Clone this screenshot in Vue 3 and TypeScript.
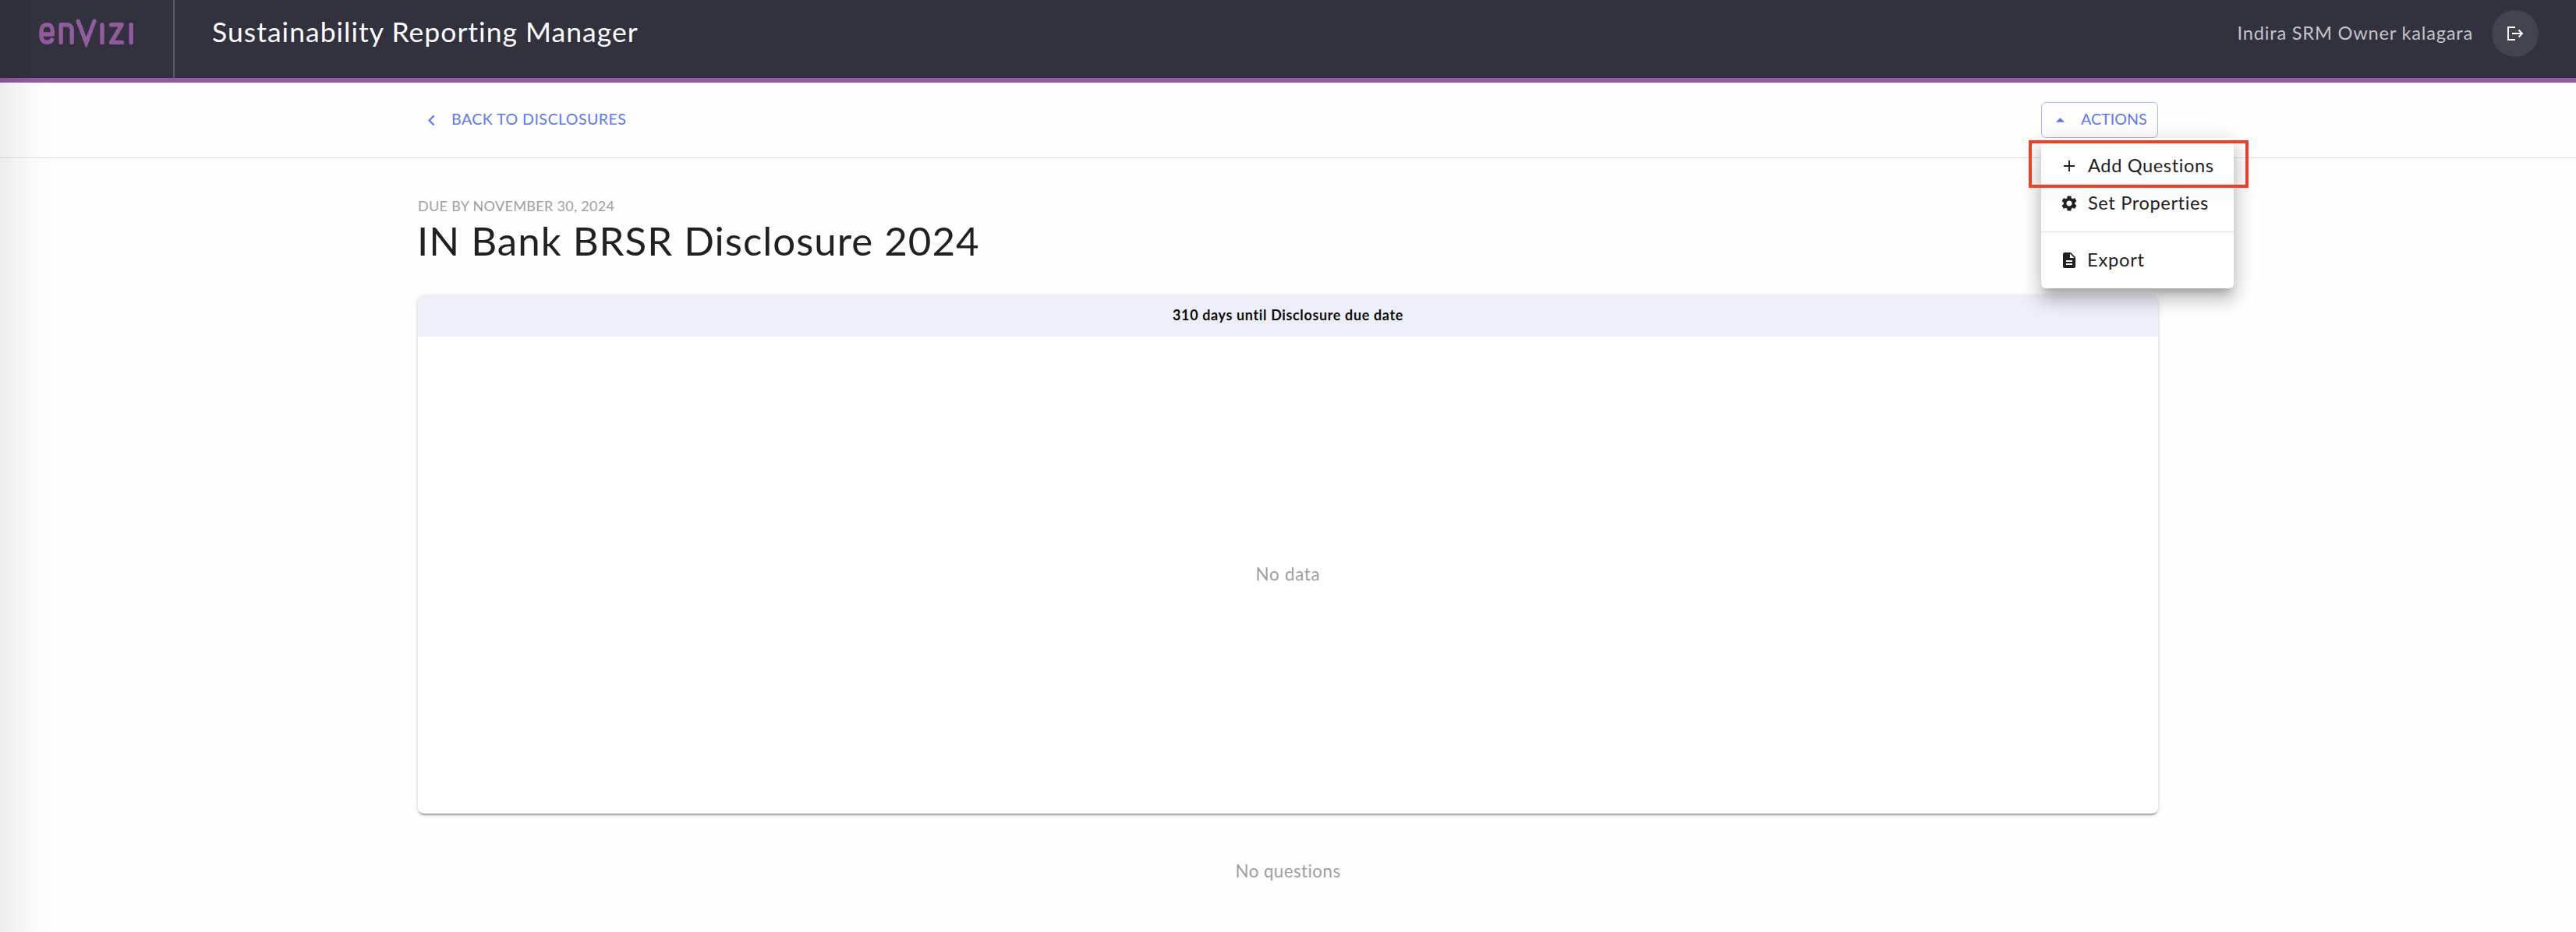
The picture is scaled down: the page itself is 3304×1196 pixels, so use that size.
<script setup lang="ts">
interface MenuItem {
  label: string
  icon: string
  kind: string
}

const groups: MenuItem[][] = [
  [
    { label: 'Add Questions', kind: 'add', icon: 'M19 13h-6v6h-2v-6H5v-2h6V5h2v6h6v2z' },
    {
      label: 'Set Properties',
      kind: 'set',
      icon: 'M19.14 12.94c.04-.3.06-.61.06-.94 0-.32-.02-.64-.07-.94l2.03-1.58c.18-.14.23-.41.12-.61l-1.92-3.32c-.12-.22-.37-.29-.59-.22l-2.39.96c-.5-.38-1.03-.7-1.62-.94l-.36-2.54c-.04-.24-.24-.41-.48-.41h-3.84c-.24 0-.43.17-.47.41l-.36 2.54c-.59.24-1.13.57-1.62.94l-2.39-.96c-.22-.08-.47 0-.59.22L2.74 8.87c-.12.21-.08.47.12.61l2.03 1.58c-.05.3-.09.63-.09.94s.02.64.07.94l-2.03 1.58c-.18.14-.23.41-.12.61l1.92 3.32c.12.22.37.29.59.22l2.39-.96c.5.38 1.03.7 1.62.94l.36 2.54c.05.24.24.41.48.41h3.84c.24 0 .44-.17.47-.41l.36-2.54c.59-.24 1.13-.56 1.62-.94l2.39.96c.22.08.47 0 .59-.22l1.92-3.32c.12-.22.07-.47-.12-.61l-2.01-1.58zM12 15.6c-1.98 0-3.6-1.62-3.6-3.6s1.62-3.6 3.6-3.6 3.6 1.62 3.6 3.6-1.62 3.6-3.6 3.6z',
    },
  ],
  [
    {
      label: 'Export',
      kind: 'export',
      icon: 'M14 2H6c-1.1 0-1.99.9-1.99 2L4 20c0 1.1.89 2 1.99 2H18c1.1 0 2-.9 2-2V8l-6-6zm2 16H8v-2h8v2zm0-4H8v-2h8v2zm-3-5V3.5L18.5 9H13z',
    },
  ],
]
</script>

<template>
  <div class="page">
    <header class="topbar">
      <div class="brand">
        <svg class="logo" viewBox="48 22 126 42" role="img" aria-label="envizi">
          <path d="M53 44H67.3V39.5C67.3 34.5 64.5 31.7 60.2 31.7C56 31.7 53 34.5 53 39.5V46.5C53 51.5 56 54.3 60.2 54.3C63.3 54.3 65.3 53.2 66.6 51.2" />
          <path d="M78.2 54.5V31.7H85.5C89.8 31.7 92.2 34 92.2 38V54.5" />
          <path class="solid" d="M97.7 28.2C96.4 24.7 101.3 23 102.7 26.3L110.7 47.5L118.5 26.3C119.9 23 124.7 24.7 123.4 28.2L111.6 60C111.2 61.3 110.1 61.3 109.7 60Z" />
          <path d="M131 31.7V54.5" />
          <path d="M142.7 31.7H156.3L142.7 54.4H156.5" />
          <path d="M168.2 31.7V54.5" />
        </svg>
      </div>
      <h2 class="product">Sustainability Reporting Manager</h2>
      <div class="account">
        <span class="user">Indira SRM Owner kalagara</span>
        <button class="logout" aria-label="Log out">
          <svg viewBox="0 0 24 22">
            <path d="M12 3H3V19H12M8 11H20M16.5 6.5L21 11L16.5 15.5" />
          </svg>
        </button>
      </div>
    </header>

    <nav class="subbar">
      <div class="subbar-inner">
        <a class="back">
          <svg viewBox="0 0 24 24"><path d="M15.41 7.41L14 6l-6 6 6 6 1.41-1.41L10.83 12z" /></svg>
          <span>BACK TO DISCLOSURES</span>
        </a>
        <div class="actions">
          <button class="actions-btn">
            <svg viewBox="0 0 24 24"><path d="M7 14l5-5 5 5z" /></svg>
            <span>ACTIONS</span>
          </button>
          <div class="menu">
            <div v-for="(group, i) in groups" :key="i" class="group">
              <div v-for="item in group" :key="item.label" class="item" :class="item.kind">
                <svg viewBox="0 0 24 24"><path :d="item.icon" /></svg>
                <span>{{ item.label }}</span>
              </div>
            </div>
            <div class="highlight"></div>
          </div>
        </div>
      </div>
    </nav>

    <main class="content">
      <div class="due">DUE BY NOVEMBER 30, 2024</div>
      <h1>IN Bank BRSR Disclosure 2024</h1>
      <section class="card">
        <div class="card-head"><span>310 days until Disclosure due date</span></div>
        <div class="card-body"><span>No data</span></div>
      </section>
      <div class="none"><span>No questions</span></div>
    </main>
    <div class="edge"></div>
  </div>
</template>

<style>
body {
  margin: 0;
  background: #fefefe;
}
</style>

<style scoped>
.page {
  position: relative;
  height: 1196px;
  overflow: hidden;
  background: #fefefe;
  font-family: Lato, "Liberation Sans", sans-serif;
  color: #212121;
}
.page * {
  box-sizing: border-box;
}
button {
  font: inherit;
  margin: 0;
}
svg {
  display: block;
  flex: none;
  fill: currentColor;
}
.topbar {
  display: flex;
  height: 106px;
  background: #31323e;
  border-bottom: 6px solid #945a9f;
}
.brand {
  width: 224px;
  padding: 22px 0 0 48px;
  border-right: 2px solid #5c5d67;
}
.logo {
  width: 126px;
  height: 42px;
  fill: none;
  stroke: #945a9f;
  stroke-width: 5.4;
  stroke-linecap: round;
  stroke-linejoin: round;
}
.logo .solid {
  fill: #945a9f;
  stroke: none;
}
.product {
  margin: 0 0 0 48px;
  font-size: 35.5px;
  font-weight: 400;
  line-height: 82px;
  letter-spacing: 1.03px;
  color: #fff;
}
.account {
  display: flex;
  align-items: center;
  height: 86px;
  margin-left: auto;
  padding-right: 48px;
}
.user {
  margin-right: 24px;
  padding-bottom: 2px;
  font-size: 23.6px;
  letter-spacing: 0.799px;
  color: #c4c4c8;
}
.logout {
  display: flex;
  align-items: center;
  justify-content: center;
  width: 60px;
  height: 60px;
  padding: 0;
  border: 0;
  border-radius: 50%;
  background: #43434f;
  color: #fff;
}
.logout svg {
  width: 24px;
  height: 22px;
  fill: none;
  stroke: currentColor;
  stroke-width: 2;
}
.subbar {
  height: 97px;
  border-bottom: 1px solid #dedede;
}
.subbar-inner {
  display: flex;
  justify-content: space-between;
  width: 2232px;
  margin: 0 auto;
  padding-top: 25px;
}
.back,
.actions-btn {
  display: flex;
  align-items: center;
  height: 46px;
  font-size: 19.6px;
  color: #5a78f5;
}
.back {
  padding-left: 4px;
  gap: 12px;
  letter-spacing: 0.443px;
}
.back svg,
.actions-btn svg {
  width: 27px;
  height: 27px;
}
.back span,
.actions-btn span {
  padding-bottom: 3px;
}
.actions {
  position: relative;
}
.actions-btn {
  width: 150px;
  padding: 0 0 0 10px;
  gap: 13px;
  border: 1px solid #a9b8fa;
  border-radius: 6px;
  background: transparent;
  letter-spacing: 0.051px;
}
.menu {
  position: absolute;
  z-index: 2;
  top: 46px;
  left: 0;
  width: 247px;
  height: 193px;
  padding: 12px 0;
  border-radius: 6px;
  background: #fff;
  box-shadow:
    0 10px 10px -6px rgba(0, 0, 0, 0.2),
    0 16px 20px 2px rgba(0, 0, 0, 0.14),
    0 6px 28px 4px rgba(0, 0, 0, 0.12);
}
.group + .group {
  margin-top: 12px;
  padding-top: 12px;
  border-top: 1px solid #dedede;
}
.item {
  display: flex;
  align-items: center;
  height: 48px;
  padding-left: 24px;
  gap: 12px;
  font-size: 23.6px;
  letter-spacing: 0.617px;
  white-space: nowrap;
}
.item svg {
  width: 24px;
  height: 24px;
}
.item span {
  padding-bottom: 2px;
}
.item.set {
  letter-spacing: 0.632px;
}
.item.export {
  letter-spacing: 0.787px;
}
.item.export span {
  margin-left: -1px;
}
.highlight {
  position: absolute;
  top: 3px;
  left: -16px;
  width: 282px;
  height: 61px;
  border: 4px solid #ec4126;
}
.content {
  width: 2232px;
  margin: 0 auto;
  padding-top: 49px;
}
.due {
  font-size: 18px;
  line-height: 24px;
  letter-spacing: 0.322px;
  color: #9e9e9e;
}
h1 {
  margin: 0 0 36px -1px;
  font-size: 51px;
  font-weight: 400;
  line-height: 66px;
  letter-spacing: 1.005px;
}
.card {
  height: 666px;
  border-radius: 8px;
  background: #fff;
  box-shadow:
    0 4px 2px -2px rgba(0, 0, 0, 0.2),
    0 2px 2px 0 rgba(0, 0, 0, 0.14),
    0 2px 6px 0 rgba(0, 0, 0, 0.12);
}
.card-head {
  height: 54px;
  border-radius: 8px 8px 0 0;
  background: #eceff8;
  text-align: center;
  font-size: 18px;
  font-weight: 700;
  line-height: 53px;
  letter-spacing: 0.63px;
  color: #0c0c0c;
}
.card-body {
  height: 612px;
  text-align: center;
  font-size: 22.4px;
  line-height: 610px;
  letter-spacing: 0.72px;
  color: #9e9e9e;
}
.none {
  text-align: center;
  font-size: 22.4px;
  line-height: 148px;
  letter-spacing: 0.42px;
  color: #9e9e9e;
}
.edge {
  position: absolute;
  z-index: 3;
  top: 0;
  left: 0;
  width: 68px;
  height: 1196px;
  background: linear-gradient(to right, rgba(0, 0, 0, 0.07), rgba(0, 0, 0, 0.018) 55%, rgba(0, 0, 0, 0));
}
</style>
